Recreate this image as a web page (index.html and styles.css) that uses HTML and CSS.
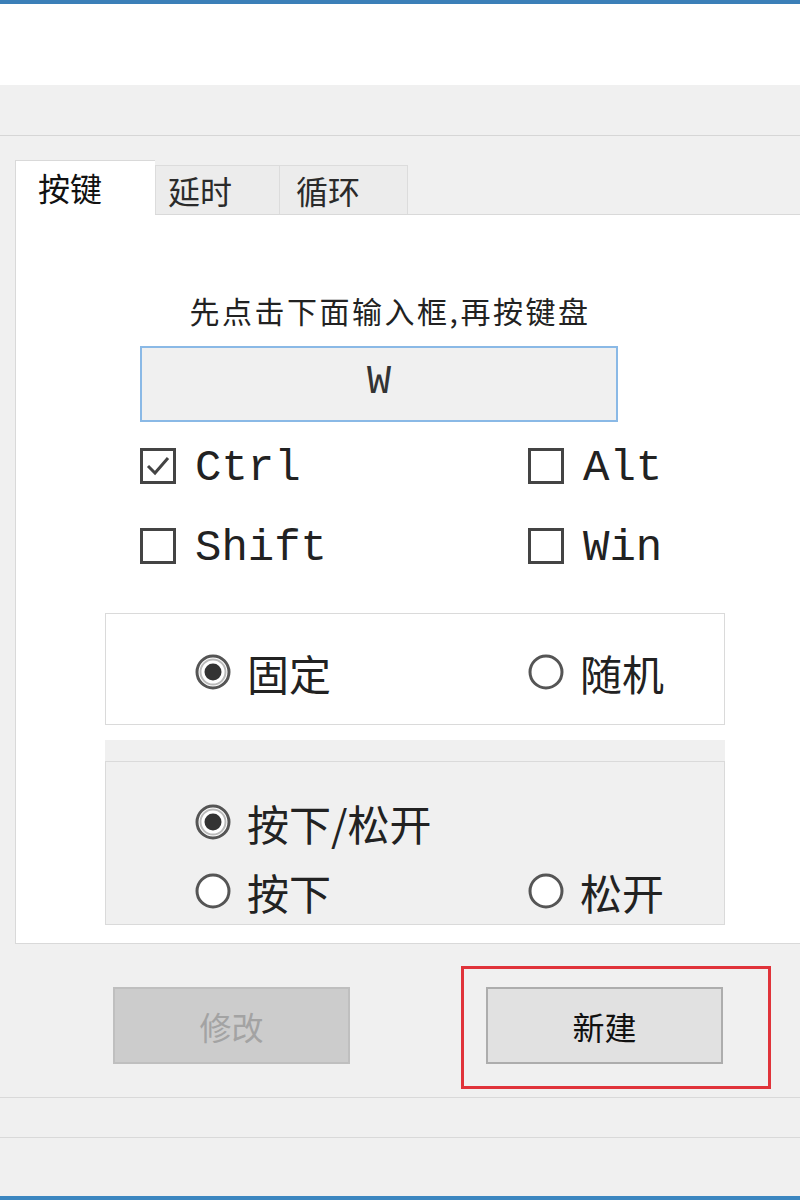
FILE: index.html
```html
<!DOCTYPE html>
<html lang="zh-CN">
<head>
  <meta charset="UTF-8">
  <title>按键设置</title>
  <link rel="stylesheet" href="styles.css">
</head>
<body>
<div class="window">
  <div class="header"></div>
  <div class="toolbar"></div>

  <div class="tabs">
    <div class="tab active">按键</div>
    <div class="tab">延时</div>
    <div class="tab">循环</div>
  </div>

  <div class="panel">
    <div class="hint">先点击下面输入框,再按键盘</div>
    <div class="keybox">W</div>

    <div class="mods">
      <label class="check">
        <svg width="36" height="36" viewBox="0 0 36 36"><rect x="1.5" y="1.5" width="33" height="33" fill="#fff" stroke="#444" stroke-width="3"/><path d="M8 18 L15 25 L28 10" fill="none" stroke="#444" stroke-width="3"/></svg>
        <span>Ctrl</span>
      </label>
      <label class="check">
        <svg width="36" height="36" viewBox="0 0 36 36"><rect x="1.5" y="1.5" width="33" height="33" fill="#fff" stroke="#444" stroke-width="3"/></svg>
        <span>Alt</span>
      </label>
      <label class="check">
        <svg width="36" height="36" viewBox="0 0 36 36"><rect x="1.5" y="1.5" width="33" height="33" fill="#fff" stroke="#444" stroke-width="3"/></svg>
        <span>Shift</span>
      </label>
      <label class="check">
        <svg width="36" height="36" viewBox="0 0 36 36"><rect x="1.5" y="1.5" width="33" height="33" fill="#fff" stroke="#444" stroke-width="3"/></svg>
        <span>Win</span>
      </label>
    </div>

    <div class="group">
      <div class="radio-row">
        <label class="radio">
          <svg width="36" height="36" viewBox="0 0 36 36"><circle cx="18" cy="18" r="16" fill="#fff" stroke="#555" stroke-width="3"/><circle cx="18" cy="18" r="12.5" fill="none" stroke="#bbb" stroke-width="2"/><circle cx="18" cy="18" r="8.5" fill="#333"/></svg>
          <span>固定</span>
        </label>
        <label class="radio">
          <svg width="36" height="36" viewBox="0 0 36 36"><circle cx="18" cy="18" r="16" fill="#fff" stroke="#555" stroke-width="3"/></svg>
          <span>随机</span>
        </label>
      </div>
    </div>

    <div class="group alt">
      <div class="group-body">
        <div class="radio-row">
          <label class="radio">
            <svg width="36" height="36" viewBox="0 0 36 36"><circle cx="18" cy="18" r="16" fill="#fff" stroke="#555" stroke-width="3"/><circle cx="18" cy="18" r="12.5" fill="none" stroke="#bbb" stroke-width="2"/><circle cx="18" cy="18" r="8.5" fill="#333"/></svg>
            <span>按下/松开</span>
          </label>
        </div>
        <div class="radio-row">
          <label class="radio">
            <svg width="36" height="36" viewBox="0 0 36 36"><circle cx="18" cy="18" r="16" fill="#fff" stroke="#555" stroke-width="3"/></svg>
            <span>按下</span>
          </label>
          <label class="radio">
            <svg width="36" height="36" viewBox="0 0 36 36"><circle cx="18" cy="18" r="16" fill="#fff" stroke="#555" stroke-width="3"/></svg>
            <span>松开</span>
          </label>
        </div>
      </div>
    </div>
  </div>

  <div class="actions">
    <button class="btn" disabled>修改</button>
    <div class="highlight">
      <button class="btn">新建</button>
    </div>
  </div>

  <div class="status"></div>
  <div class="footer"></div>
</div>
</body>
</html>
```

FILE: styles.css
```css
body {
  margin: 0;
  padding: 0;
  background: #f0f0f0;
  font-family: "Noto Sans CJK SC", "Noto Sans", sans-serif;
  color: #1e1e1e;
}
.window {
  width: 800px;
  height: 1200px;
  display: flex;
  flex-direction: column;
  overflow: hidden;
}
.header {
  height: 81px;
  background: #fff;
  border-top: 4px solid #3b7fb8;
}
.toolbar {
  height: 50px;
  background: #f0f0f0;
  border-bottom: 1px solid #d6d6d6;
}
.tabs {
  display: flex;
  align-items: flex-end;
  padding: 24px 0 0 15px;
  height: 54px;
  position: relative;
  z-index: 1;
}
.tab {
  box-sizing: border-box;
  height: 49px;
  padding: 4px 0 0 15px;
  background: #ececec;
  border: 1px solid #dcdcdc;
  border-bottom: none;
  font-size: 32px;
  line-height: 40px;
  color: #2a2a2a;
}
.tab:nth-child(2) { width: 125px; padding-left: 12px; }
.tab:nth-child(3) { width: 128px; padding-left: 16px; border-left: none; }
.tab.active {
  width: 140px;
  height: 55px;
  margin-bottom: -1px;
  padding-left: 22px;
  padding-top: 6px;
  background: #fff;
  border-color: #d9d9d9;
  border-right: none;
  color: #111;
}
.panel {
  box-sizing: border-box;
  height: 730px;
  margin-left: 15px;
  width: 800px;
  background: #fff;
  border: 1px solid #d9d9d9;
  border-right: none;
  padding-top: 77px;
}
.hint {
  width: 500px;
  margin-left: 124px;
  text-align: center;
  font-size: 30px;
  line-height: 36px;
  letter-spacing: 2.5px;
  color: #222;
}
.keybox {
  box-sizing: border-box;
  width: 478px;
  height: 76px;
  margin: 18px 0 0 124px;
  background: #f0f0f0;
  border: 2px solid #8ab9e6;
  text-align: center;
  font-family: "Liberation Mono", monospace;
  font-size: 40px;
  line-height: 70px;
  color: #333;
}
.mods {
  display: grid;
  grid-template-columns: 388px auto;
  row-gap: 30px;
  margin: 19px 0 0 124px;
}
.check {
  display: flex;
  align-items: center;
  gap: 19px;
  height: 50px;
  font-family: "Liberation Mono", monospace;
  font-size: 44px;
  color: #222;
}
.check span { margin-top: 3px; }
.check svg { flex: none; }
.group {
  box-sizing: border-box;
  width: 620px;
  height: 112px;
  margin: 42px 0 0 89px;
  border: 1px solid #dadada;
  padding: 6px 0 0 89px;
  display: flex;
  align-items: center;
}
.group.alt {
  height: 185px;
  margin-top: 15px;
  padding: 21px 0 0 0;
  border: none;
  background: #f0f0f0;
  display: block;
}
.group-body {
  box-sizing: border-box;
  height: 164px;
  border: 1px solid #dadada;
  padding: 35px 0 0 89px;
  display: flex;
  flex-direction: column;
  gap: 19px;
}
.radio-row {
  display: grid;
  grid-template-columns: 333px auto;
}
.radio {
  display: flex;
  align-items: center;
  gap: 16px;
  height: 50px;
  font-size: 42px;
  color: #222;
}
.radio svg { flex: none; }
.actions {
  display: flex;
  align-items: flex-start;
  gap: 111px;
  padding: 22px 0 0 113px;
}
.actions > .btn { margin-top: 21px; }
.btn {
  box-sizing: border-box;
  width: 237px;
  height: 77px;
  font-family: "Noto Sans CJK SC", sans-serif;
  font-size: 32px;
  color: #111;
  background: #e1e1e1;
  border: 2px solid #adadad;
}
.btn:disabled {
  background: #cccccc;
  border-color: #bfbfbf;
  color: #a3a3a3;
}
.highlight {
  padding: 18px 45px 22px 22px;
  border: 3px solid #e0333a;
}
.highlight .btn { display: block; }
.status {
  height: 39px;
  margin-top: 8px;
  border-top: 1px solid #d9d9d9;
  border-bottom: 1px solid #d9d9d9;
}
.footer {
  flex: 1;
  border-bottom: 4px solid #3b86c0;
}
```
